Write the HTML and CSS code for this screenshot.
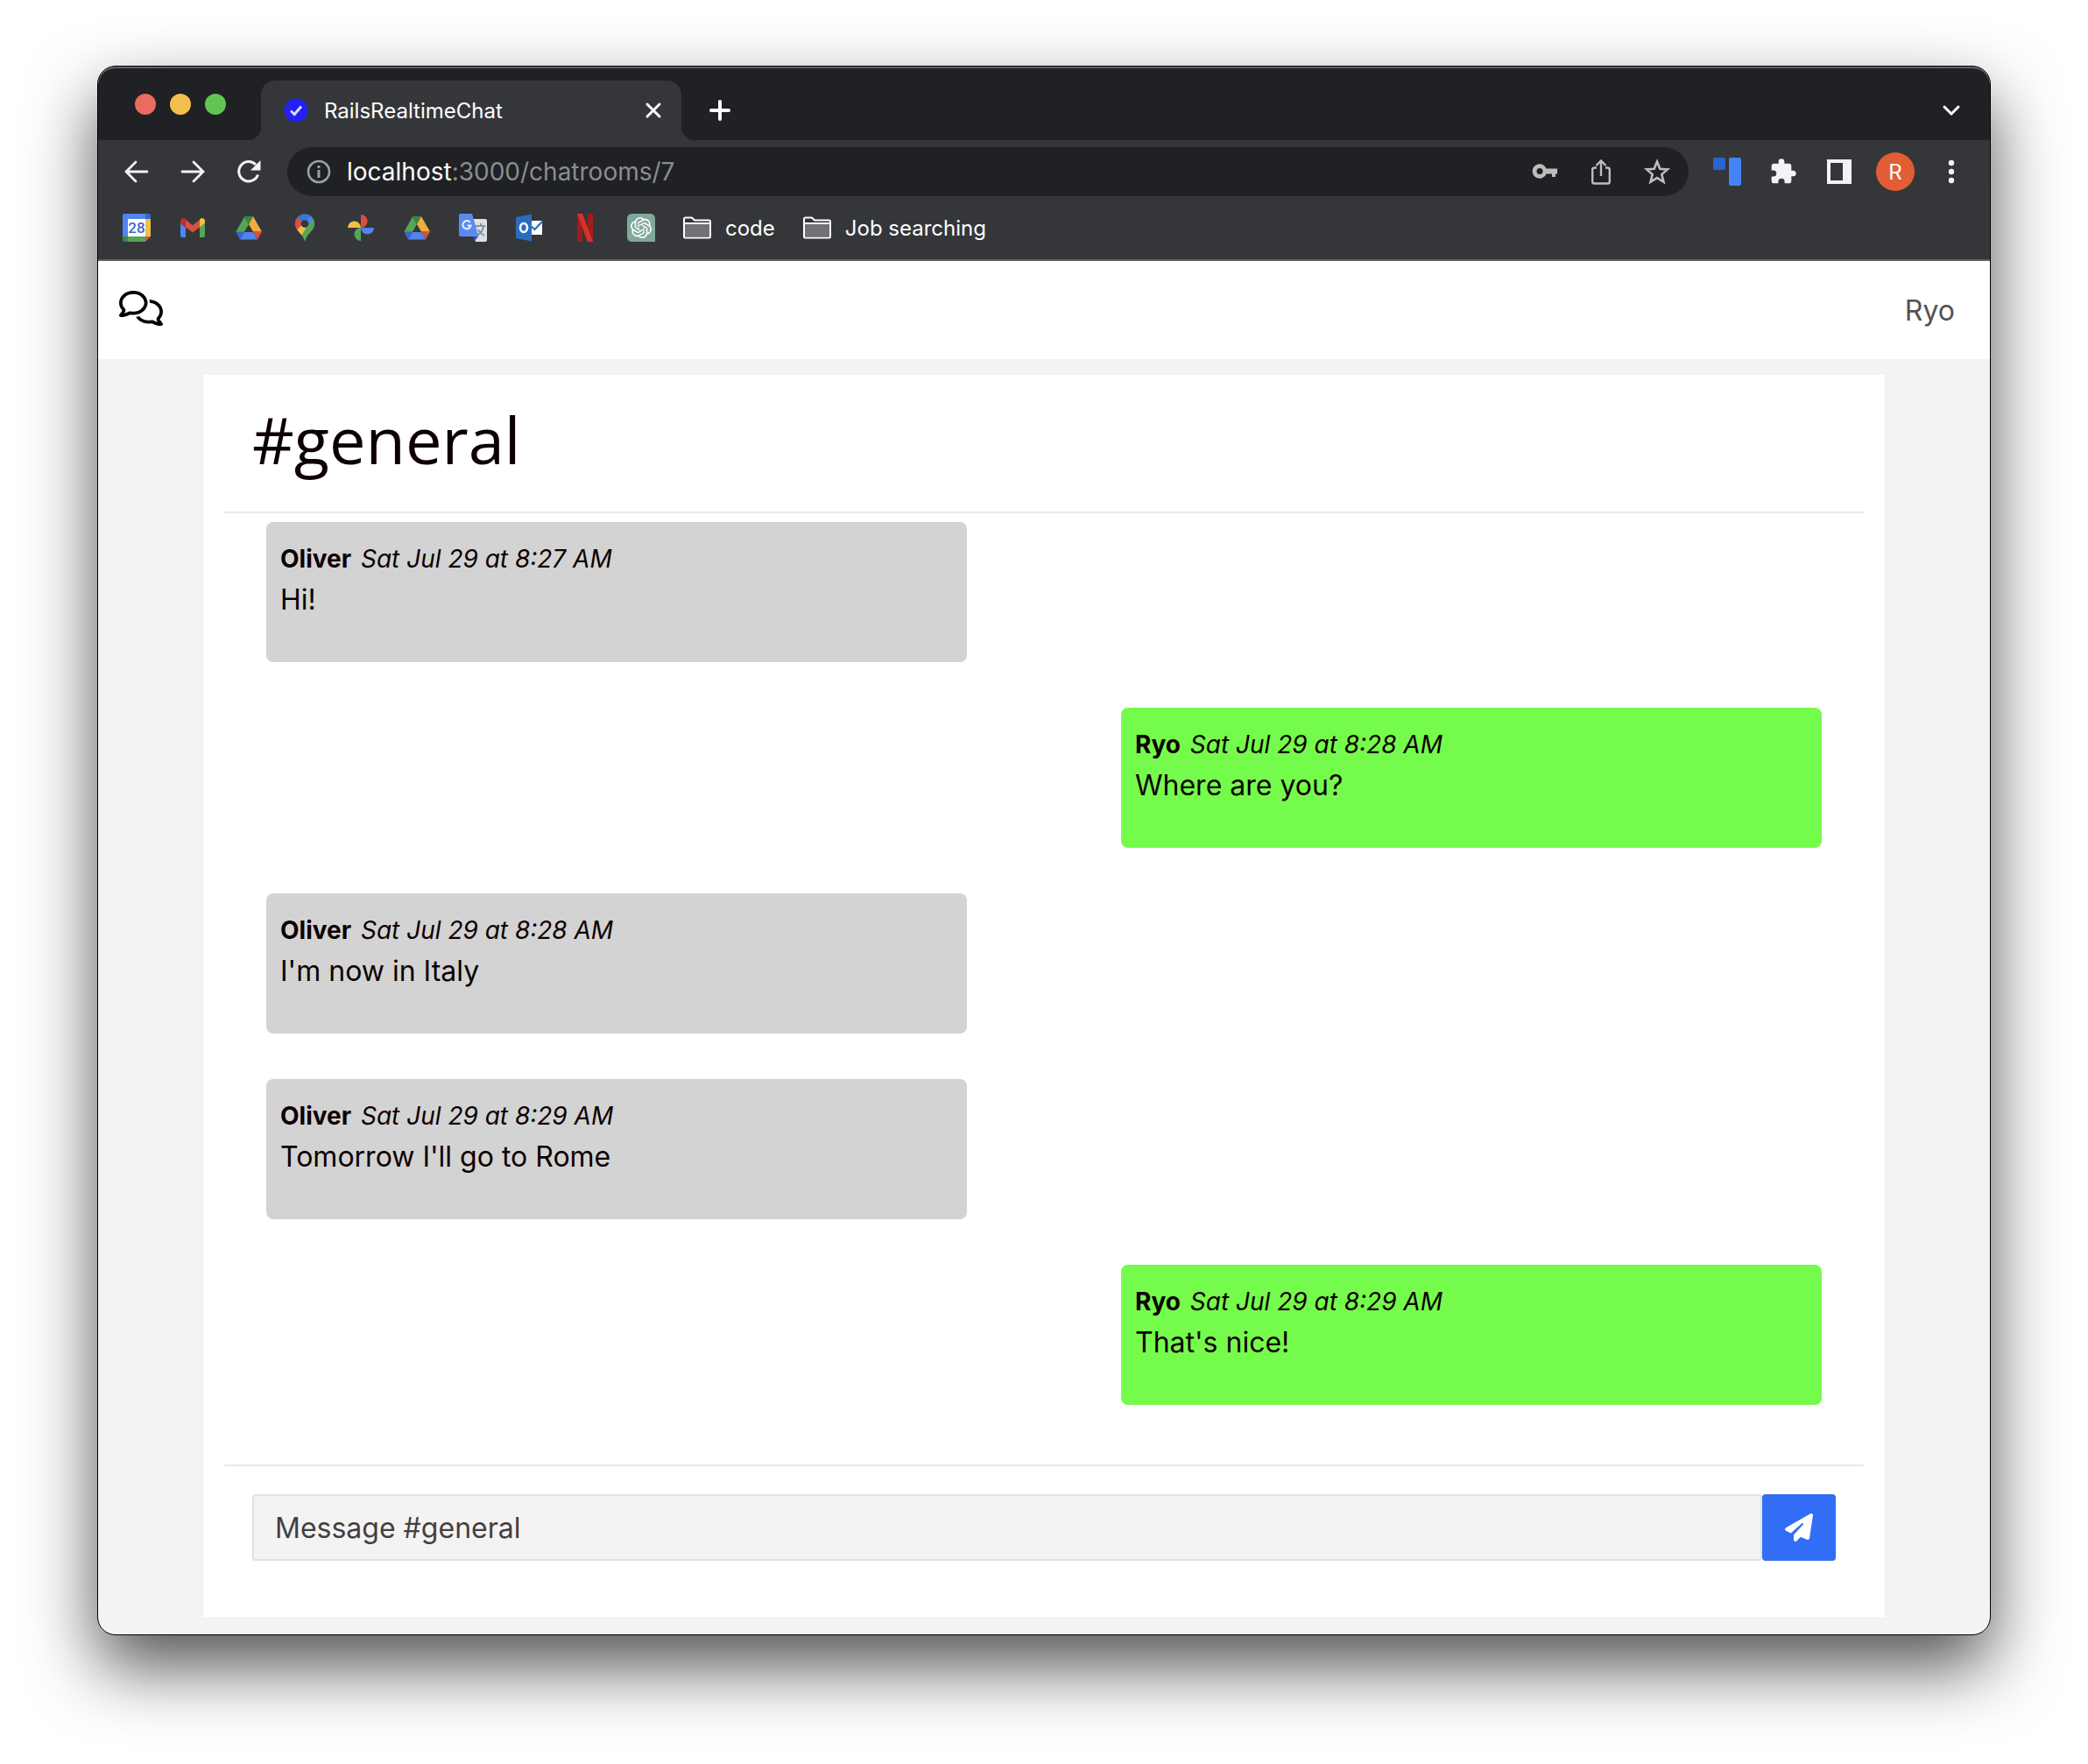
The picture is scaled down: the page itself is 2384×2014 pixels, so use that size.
FILE: index.html
```html
<!DOCTYPE html>
<html lang="en">
<head>
<meta charset="utf-8">
<meta name="viewport" content="width=device-width, initial-scale=1">
<title>RailsRealtimeChat</title>
<link rel="stylesheet" href="styles.css">
</head>
<body>
<svg class="defs" aria-hidden="true">
  <symbol id="drive" viewBox="0 0 32 32">
    <path fill="#55a559" d="M11 3.500 16 12 6 29 1.500 20.500z"/>
    <path fill="#3f8447" d="M11 3h10l-5 9z"/>
    <path fill="#efae3c" d="M21 3l10 17.500H21L16 12z"/>
    <path fill="#5084ee" d="M11 21h10l5 8.500H6z"/>
    <path fill="#3367d1" d="M1.500 20.500H11L6 29.500z"/>
    <path fill="#d94f40" d="M21 20.500h10l-5 9z"/>
  </symbol>
  <symbol id="folder" viewBox="0 0 32 32">
    <path fill="none" stroke="#fff" stroke-width="2" stroke-linejoin="round" d="M1 26V6q0-1.500 1.500-1.500H10l3 3h16.500Q31 7.500 31 9v17q0 1.500-1.500 1.500h-27Q1 27.500 1 26z"/>
    <path fill="#717275" d="M2 12h28v14.500H2z"/>
    <path stroke="#fff" stroke-width="2" d="M1 11h30"/>
  </symbol>
</svg>
<div class="window">
  <header class="chrome">
    <div class="tabstrip">
      <div class="lights"><span class="light red"></span><span class="light amber"></span><span class="light green"></span></div>
      <div class="tab">
        <svg class="icon28" viewBox="0 0 28 28"><circle cx="14" cy="14" r="13.500" fill="#2320f5"/><path fill="none" stroke="#dcdcff" stroke-width="3" d="M8 14.500l4.200 4L20 9.500"/></svg>
        <span class="tab-title">RailsRealtimeChat</span>
        <button class="plain" aria-label="Close tab"><svg class="icon28" viewBox="0 0 28 28"><path stroke="#fff" stroke-width="3" stroke-linecap="round" d="M7 7l14 14M21 7L7 21"/></svg></button>
      </div>
      <button class="plain new-tab" aria-label="New tab"><svg class="icon28" viewBox="0 0 28 28"><path stroke="#fff" stroke-width="4" stroke-linecap="round" d="M14 4v20M4 14h20"/></svg></button>
      <button class="plain tab-search" aria-label="Search tabs"><svg class="icon28" viewBox="0 0 28 28"><path fill="none" stroke="#fff" stroke-width="3" stroke-linecap="round" d="M6 10l8 8 8-8"/></svg></button>
    </div>
    <div class="toolbar">
      <button class="plain" aria-label="Back"><svg class="icon32" viewBox="0 0 32 32"><path fill="none" stroke="#f1f3f4" stroke-width="2.800" stroke-linecap="round" d="M28 16H4M15 5L4 16l11 11"/></svg></button>
      <button class="plain" aria-label="Forward"><svg class="icon32" viewBox="0 0 32 32"><path fill="none" stroke="#f1f3f4" stroke-width="2.800" stroke-linecap="round" d="M4 16h24M17 5l11 11-11 11"/></svg></button>
      <button class="plain" aria-label="Reload"><svg class="icon32" viewBox="0 0 32 32"><path fill="none" stroke="#f1f3f4" stroke-width="3" d="M26.500 19.500A11.200 11.200 0 1 1 24 8"/><path fill="#f1f3f4" d="M29.500 3v11.500H18z"/></svg></button>
      <div class="omnibox">
        <svg class="icon32" viewBox="0 0 32 32"><circle cx="16" cy="16" r="12" fill="none" stroke="#9aa0a6" stroke-width="2.600"/><path stroke="#9aa0a6" stroke-width="3" d="M16 14v9M16 9v3"/></svg>
        <a class="url" href="#"><b>localhost</b>:3000/chatrooms/7</a>
        <button class="plain" aria-label="Passwords"><svg class="icon32" viewBox="0 0 32 32"><path fill="#bdbdbd" fill-rule="evenodd" d="M17.500 12.500H30v6h-2V22h-4v-3.500h-6.500A8.200 8.200 0 1 1 17.500 12.500zM10 12a3.500 3.500 0 1 0 0 7 3.500 3.500 0 0 0 0-7z"/></svg></button>
        <button class="plain" aria-label="Share"><svg class="icon32" viewBox="0 0 32 32"><path fill="none" stroke="#bdbdbd" stroke-width="2.400" d="M11 11.500H8.500Q6.200 11.500 6.200 14v13.500q0 2 2 2h15.600q2 0 2-2V14q0-2.500-2.300-2.500H21M16 21V4M10.500 9L16 3.500 21.500 9"/></svg></button>
        <button class="plain" aria-label="Bookmark"><svg class="icon32" viewBox="0 0 32 32"><path fill="none" stroke="#bdbdbd" stroke-width="2.600" d="M16 4.500l3.300 8.200 8.700.7-6.700 5.700 2.200 8.700-7.500-4.700-7.500 4.700 2.200-8.700L4 13.400l8.700-.7z"/></svg></button>
      </div>
      <div class="actions">
        <button class="plain" aria-label="Extension"><svg class="icon32" viewBox="0 0 32 32"><rect width="14" height="14" rx="2" fill="#2864d2"/><rect x="18" width="14" height="32" rx="2" fill="#4583f6"/></svg></button>
        <button class="plain" aria-label="Extensions"><svg class="icon32" viewBox="0 0 24 24"><path fill="#f1f3f4" d="M20.500 11H19V7c0-1.100-.9-2-2-2h-4V3.500a2.500 2.500 0 0 0-5 0V5H4c-1.100 0-2 .9-2 2v3.800h1.500a2.700 2.700 0 0 1 0 5.400H2V20c0 1.100.9 2 2 2h3.800v-1.500a2.700 2.700 0 0 1 5.400 0V22H17c1.100 0 2-.9 2-2v-4h1.500a2.500 2.500 0 0 0 0-5z"/></svg></button>
        <button class="plain" aria-label="Side panel"><svg class="icon32" viewBox="0 0 32 32"><path fill="#f1f3f4" fill-rule="evenodd" d="M2 2h28v28H2zM6 6v20h14V6z"/></svg></button>
        <button class="plain avatar" aria-label="Profile">R</button>
        <button class="plain" aria-label="Menu"><svg class="icon32" viewBox="0 0 32 32"><g fill="#f1f3f4"><circle cx="16" cy="6" r="3.200"/><circle cx="16" cy="16" r="3.200"/><circle cx="16" cy="26" r="3.200"/></g></svg></button>
      </div>
    </div>
    <nav class="bookmarks" aria-label="Bookmarks">
      <a href="#" aria-label="Calendar"><svg class="icon32" viewBox="0 0 32 32"><path fill="#5084ee" d="M2 0h24v6H6v20H0V2q0-2 2-2z"/><path fill="#3367d1" d="M26 0h4q2 0 2 2v4h-6z"/><path fill="#f1bf42" d="M26 6h6v20h-6z"/><path fill="#55a559" d="M6 26h20v6H6z"/><path fill="#3f8447" d="M0 26h6v6H2q-2 0-2-2z"/><path fill="#d94f40" d="M26 26h6l-6 6z"/><path fill="#fff" d="M6 6h20v20H6z"/><text x="16" y="22" class="cal">28</text></svg></a>
      <a href="#" aria-label="Gmail"><svg class="icon32" viewBox="0 0 32 32"><path fill="#5084ee" d="M2 11l6 4.500V27H4q-2 0-2-2z"/><path fill="#55a559" d="M30 11l-6 4.500V27h4q2 0 2-2z"/><path fill="#d94f40" d="M8 7l8 6.200L24 7v8.500l-8 6-8-6z"/><path fill="#b1332b" d="M2 11V8.500C2 5 5.500 4 8 6.500v9z"/><path fill="#f1bf42" d="M30 11V8.500C30 5 26.500 4 24 6.500v9z"/></svg></a>
      <a href="#" aria-label="Drive"><svg class="icon32"><use href="#drive"/></svg></a>
      <a href="#" aria-label="Maps"><svg class="icon32" viewBox="0 0 32 32"><clipPath id="pin"><path d="M16 .5C9.500.5 5 5.500 5 11.500c0 8 8.500 10.500 11 20.500 2.500-10 11-12.500 11-20.500C27 5.500 22.500.5 16 .5z"/></clipPath><g clip-path="url(#pin)"><path fill="#55a559" d="M0 0h32v32H0z"/><path fill="#f1bf42" d="M3 20L16 6l6 8L9 28z"/><path fill="#d94f40" d="M0 0h9l7 9-12 13z"/><path fill="#5084ee" d="M19 0h12v6L17 17z"/><path fill="#3b74e0" d="M7 4L14 0h6l4 2-8 9z"/><path fill="#55a559" d="M26 6h6v16H14L19 14z"/></g><circle cx="16" cy="11.500" r="4.300" fill="#35363a"/></svg></a>
      <a href="#" aria-label="Photos"><svg class="icon32" viewBox="0 0 32 32"><path fill="#d94f40" d="M16 1a7.500 7.500 0 0 1 0 15z"/><path fill="#f1bf42" d="M1 16a7.500 7.500 0 0 1 15 0z"/><path fill="#5084ee" d="M16 16h15a7.500 7.500 0 0 1-15 0z"/><path fill="#55a559" d="M16 16v15a7.500 7.500 0 0 1 0-15z"/></svg></a>
      <a href="#" aria-label="Drive"><svg class="icon32"><use href="#drive"/></svg></a>
      <a href="#" aria-label="Translate"><svg class="icon32" viewBox="0 0 32 32"><path fill="#dfe0e1" d="M14 6h16q2 0 2 2v22q0 2-2 2H19z"/><path fill="none" stroke="#7b95a5" stroke-width="2" d="M19 14h11M25 11v3M28 15c-1 5-4 8-8 10M22 18c1 3 4 5 7 7"/><path fill="#3146bd" d="M16 26h6l-5 6z"/><path fill="#5c8bef" d="M2 0h13l7.500 26H2q-2 0-2-2V2q0-2 2-2z"/><path fill="none" stroke="#eaf0fd" stroke-width="2" d="M12.800 10A4.600 4.600 0 1 0 13.600 13.500H9.500"/></svg></a>
      <a href="#" aria-label="Outlook"><svg class="icon32" viewBox="0 0 32 32"><path fill="#2b6cbf" d="M1 4l18-3.500v31L1 28z"/><path fill="#fff" d="M19 8h12v16H19z"/><path fill="none" stroke="#2b6cbf" stroke-width="2.200" d="M18 14l4.500 4L31 9"/><ellipse cx="10" cy="16" rx="4" ry="5" fill="none" stroke="#fff" stroke-width="2.600"/></svg></a>
      <a href="#" aria-label="Netflix"><svg class="icon32" viewBox="0 0 32 32"><path fill="#a11c1c" d="M7 0h6v32H7zM19 0h6v32h-6z"/><path fill="#d8302a" d="M7 0h6l12 32h-6z"/></svg></a>
      <a href="#" aria-label="ChatGPT"><svg class="icon32" viewBox="0 0 32 32"><path fill="#80a99c" d="M6 0h20q6 0 6 6v26H6q-6 0-6-6V6q0-6 6-6z"/><path fill="#fff" transform="translate(4 4)" d="M22.2819 9.8211a5.9847 5.9847 0 0 0-.5157-4.9108 6.0462 6.0462 0 0 0-6.5098-2.9A6.0651 6.0651 0 0 0 4.9807 4.1818a5.9847 5.9847 0 0 0-3.9977 2.9 6.0462 6.0462 0 0 0 .7427 7.0966 5.98 5.98 0 0 0 .511 4.9107 6.051 6.051 0 0 0 6.5146 2.9001A5.9847 5.9847 0 0 0 13.2599 24a6.0557 6.0557 0 0 0 5.7718-4.2058 5.9894 5.9894 0 0 0 3.9977-2.9001 6.0557 6.0557 0 0 0-.7475-7.0729zm-9.022 12.6081a4.4755 4.4755 0 0 1-2.8764-1.0408l.1419-.0804 4.7783-2.7582a.7948.7948 0 0 0 .3927-.6813v-6.7369l2.02 1.1686a.071.071 0 0 1 .038.052v5.5826a4.504 4.504 0 0 1-4.4945 4.4944zm-9.6607-4.1254a4.4708 4.4708 0 0 1-.5346-3.0137l.142.0852 4.783 2.7582a.7712.7712 0 0 0 .7806 0l5.8428-3.3685v2.3324a.0804.0804 0 0 1-.0332.0615L9.74 19.9502a4.4992 4.4992 0 0 1-6.1408-1.6464zM2.3408 7.8956a4.485 4.485 0 0 1 2.3655-1.9728V11.6a.7664.7664 0 0 0 .3879.6765l5.8144 3.3543-2.0201 1.1685a.0757.0757 0 0 1-.071 0l-4.8303-2.7865A4.504 4.504 0 0 1 2.3408 7.872zm16.5963 3.8558L13.1038 8.364 15.1192 7.2a.0757.0757 0 0 1 .071 0l4.8303 2.7913a4.4944 4.4944 0 0 1-.6765 8.1042v-5.6772a.79.79 0 0 0-.407-.667zm2.0107-3.0231l-.142-.0852-4.7735-2.7818a.7759.7759 0 0 0-.7854 0L9.409 9.2297V6.8974a.0662.0662 0 0 1 .0284-.0615l4.8303-2.7866a4.4992 4.4992 0 0 1 6.6802 4.66zM8.3065 12.863l-2.02-1.1638a.0804.0804 0 0 1-.038-.0567V6.0742a4.4992 4.4992 0 0 1 7.3757-3.4537l-.142.0805L8.704 5.459a.7948.7948 0 0 0-.3927.6813zm1.0976-2.3654l2.602-1.4998 2.6069 1.4998v2.9994l-2.5974 1.4997-2.6067-1.4997Z"/></svg></a>
      <a href="#" class="folder"><svg class="icon32"><use href="#folder"/></svg>code</a>
      <a href="#" class="folder"><svg class="icon32"><use href="#folder"/></svg>Job searching</a>
    </nav>
  </header>
  <div class="app">
    <nav class="navbar">
      <a href="#" aria-label="Chatrooms"><svg class="logo" viewBox="0 0 640 512"><path d="M88.200 309.100c9.800-18.300 6.800-40.800-7.500-55.800C59.400 230.900 48 204 48 176c0-63.500 63.800-128 160-128s160 64.500 160 128s-63.800 128-160 128c-13.100 0-25.800-1.300-37.800-3.600c-10.400-2-21.200-.6-30.700 4.200c-4.100 2.100-8.300 4.100-12.600 6c-16 7.200-32.900 13.500-49.900 18c2.800-4.600 5.400-9.100 7.900-13.600c1.100-1.900 2.200-3.900 3.200-5.900zM0 176c0 41.800 17.200 80.100 45.900 110.300c-.9 1.700-1.900 3.500-2.800 5.100c-10.300 18.400-22.300 36.500-36.600 52.100c-6.600 7-8.300 17.200-4.600 25.900C5.800 378.300 14.400 384 24 384c43 0 86.500-13.300 122.700-29.700c4.800-2.200 9.600-4.500 14.200-6.800c15.100 3 30.900 4.500 47.100 4.500c114.900 0 208-78.800 208-176S322.900 0 208 0S0 78.800 0 176zM432 480c16.200 0 31.900-1.600 47.100-4.500c4.600 2.300 9.400 4.600 14.200 6.800C529.500 498.700 573 512 616 512c9.600 0 18.200-5.700 22-14.500c3.800-8.800 2-19-4.600-25.900c-14.200-15.600-26.200-33.700-36.600-52.100c-.9-1.700-1.900-3.400-2.800-5.100C622.800 384.100 640 345.800 640 304c0-94.400-87.900-171.500-198.200-175.800c4.100 15.200 6.200 31.200 6.200 47.800l0 .6c87.200 6.700 144 67.500 144 127.400c0 28-11.400 54.900-32.700 77.200c-14.300 15-17.300 37.600-7.500 55.800c1.100 2 2.200 4 3.200 5.900c2.500 4.500 5.200 9 7.900 13.600c-17-4.500-33.900-10.700-49.900-18c-4.300-1.900-8.500-3.900-12.600-6c-9.500-4.800-20.300-6.200-30.700-4.200c-12.100 2.400-24.800 3.600-37.800 3.600c-61.700 0-110-26.500-136.800-62.300c-16 5.400-32.800 9.400-50 11.800C279 439.800 350 480 432 480z"/></svg></a>
      <a class="user" href="#">Ryo</a>
    </nav>
    <main class="room">
      <h1>#general</h1>
      <div class="messages">
        <article class="message"><p class="meta"><strong>Oliver</strong> <i>Sat Jul 29 at 8:27 AM</i></p><p>Hi!</p></article>
        <article class="message mine"><p class="meta"><strong>Ryo</strong> <i>Sat Jul 29 at 8:28 AM</i></p><p>Where are you?</p></article>
        <article class="message"><p class="meta"><strong>Oliver</strong> <i>Sat Jul 29 at 8:28 AM</i></p><p>I'm now in Italy</p></article>
        <article class="message"><p class="meta"><strong>Oliver</strong> <i>Sat Jul 29 at 8:29 AM</i></p><p>Tomorrow I'll go to Rome</p></article>
        <article class="message mine"><p class="meta"><strong>Ryo</strong> <i>Sat Jul 29 at 8:29 AM</i></p><p>That's nice!</p></article>
      </div>
      <form class="composer">
        <input type="text" aria-label="Message" placeholder="Message #general">
        <button type="button" aria-label="Send"><svg class="icon32" viewBox="0 0 512 512"><path fill="#fff" d="M498.100 5.600c10.100 7 15.400 19.100 13.500 31.200l-64 416c-1.500 9.700-7.400 18.200-16 23s-18.900 5.400-28 1.600L284 427.700l-68.500 74.100c-8.900 9.700-22.900 12.900-35.200 8.100S160 493.200 160 480V396.400c0-4 1.500-7.800 4.200-10.700L331.800 202.800c5.800-6.300 5.600-16-.4-22s-15.700-6.400-22-.7L106 360.800 17.700 316.600C7.100 311.300 .3 300.700 0 288.900s5.900-22.800 16.100-28.700l448-256c10.700-6.100 23.900-5.500 34 1.400z"/></svg></button>
      </form>
    </main>
  </div>
</div>
</body>
</html>
```
FILE: styles.css
```css
* { box-sizing: border-box; }

body {
  margin: 0;
  min-height: 100vh;
  padding: 75px 111px 147px;
  display: flex;
  flex-direction: column;
  background: #fff;
  color: #0d0000;
  font-family: Inter, "Liberation Sans", sans-serif;
  font-size: 32px;
}

a { color: inherit; text-decoration: none; }
svg { display: block; }
.defs { position: absolute; width: 0; height: 0; }
.icon28 { width: 28px; height: 28px; }
.icon32 { width: 32px; height: 32px; }

.plain {
  padding: 0;
  border: 0;
  background: none;
  color: inherit;
  font: inherit;
}

.window {
  flex: 1;
  display: flex;
  flex-direction: column;
  overflow: hidden;
  border: 1px solid #000;
  border-radius: 21px;
  background: #f3f3f3;
  box-shadow: 0 36px 80px rgba(0, 0, 0, .68);
}

/* browser chrome */
.chrome {
  background: #35363a;
  border-bottom: 2px solid #606164;
  color: #fff;
  font-size: 24px;
}

.tabstrip {
  display: flex;
  align-items: flex-end;
  height: 84px;
  padding-right: 30px;
  background: #202124;
  border-radius: 20px 20px 0 0;
  box-shadow: inset 0 2px #606164;
}

.lights { display: flex; gap: 16px; width: 186px; padding: 0 0 29px 42px; }
.light { width: 24px; height: 24px; border-radius: 50%; }
.red { background: #ed6a5e; }
.amber { background: #f4bf4f; }
.green { background: #61c554; }

.tab {
  position: relative;
  display: flex;
  align-items: center;
  gap: 18px;
  width: 480px;
  height: 68px;
  padding: 0 18px 0 26px;
  border-radius: 16px 16px 0 0;
  background: #35363a;
}

/* outward curves at the foot of the active tab */
.tab::before,
.tab::after {
  content: "";
  position: absolute;
  bottom: 0;
  width: 16px;
  height: 16px;
}
.tab::before { right: 100%; background: radial-gradient(circle at 0 0, #202124 16px, #35363a 17px); }
.tab::after { left: 100%; background: radial-gradient(circle at 100% 0, #202124 16px, #35363a 17px); }

.tab-title { flex: 1; }
.new-tab { margin-left: 30px; padding-bottom: 20px; }
.tab-search { margin-left: auto; padding-bottom: 20px; }

.toolbar {
  display: flex;
  align-items: center;
  gap: 32px;
  height: 72px;
  padding: 0 28px;
}

.omnibox {
  flex: 1;
  display: flex;
  align-items: center;
  gap: 32px;
  height: 56px;
  margin-left: -4px;
  padding: 0 20px;
  border-radius: 28px;
  background: #202124;
}

.url { flex: 1; margin-left: -16px; color: #8b8d90; font-size: 28px; }
.url b { color: #fff; font-weight: 400; }

.actions { display: flex; align-items: center; gap: 32px; margin-left: -4px; }

.avatar {
  width: 44px;
  height: 44px;
  margin: 0 -6px;
  border-radius: 50%;
  background: #e25d33;
  font-size: 24px;
}

.bookmarks {
  display: flex;
  align-items: center;
  gap: 32px;
  height: 64px;
  padding: 0 28px 8px;
}

.folder { display: flex; align-items: center; gap: 16px; }
.cal { fill: #3367d1; font-family: Roboto, sans-serif; font-size: 17px; font-weight: 500; text-anchor: middle; }

/* chat application */
.navbar {
  display: flex;
  align-items: center;
  justify-content: space-between;
  height: 112px;
  padding: 0 40px 0 24px;
  background: #fff;
}

.logo { width: 50px; height: 40px; margin-bottom: 4px; }
.user { color: #565252; }

.room {
  margin: 18px 120px 20px;
  padding: 0 24px 64px;
  background: #fff;
}

h1 {
  margin: 0;
  padding: 30px 32px 0;
  height: 158px;
  border-bottom: 2px solid #e9e9ef;
  font-family: "Open Sans", sans-serif;
  font-size: 74px;
  font-weight: 500;
  line-height: 88px;
}

.messages {
  display: flex;
  flex-direction: column;
  align-items: flex-start;
  gap: 52px;
  padding: 10px 48px 68px;
  border-bottom: 2px solid #e9e9ef;
}

.message {
  width: calc(50% - 88px);
  min-height: 160px;
  padding: 20px 16px;
  border-radius: 8px;
  background: #d3d3d3;
}
.message.mine { align-self: flex-end; background: #75fb4c; }
.message p { margin: 0; line-height: 48px; }
.message .meta { margin-bottom: 1px; font-size: 28px; line-height: 44px; }
.meta strong { margin-right: 3px; }

.composer { display: flex; padding: 32px 32px 0; }

.composer input {
  flex: 1;
  min-width: 0;
  height: 76px;
  padding: 0 24px;
  border: 2px solid #dee2e6;
  border-radius: 4px;
  background: #f3f3f3;
  font: inherit;
}
.composer input::placeholder { color: #463e3e; opacity: 1; }

.composer button {
  display: grid;
  place-items: center;
  width: 84px;
  border: 0;
  border-radius: 4px;
  background: #326df6;
}
```
